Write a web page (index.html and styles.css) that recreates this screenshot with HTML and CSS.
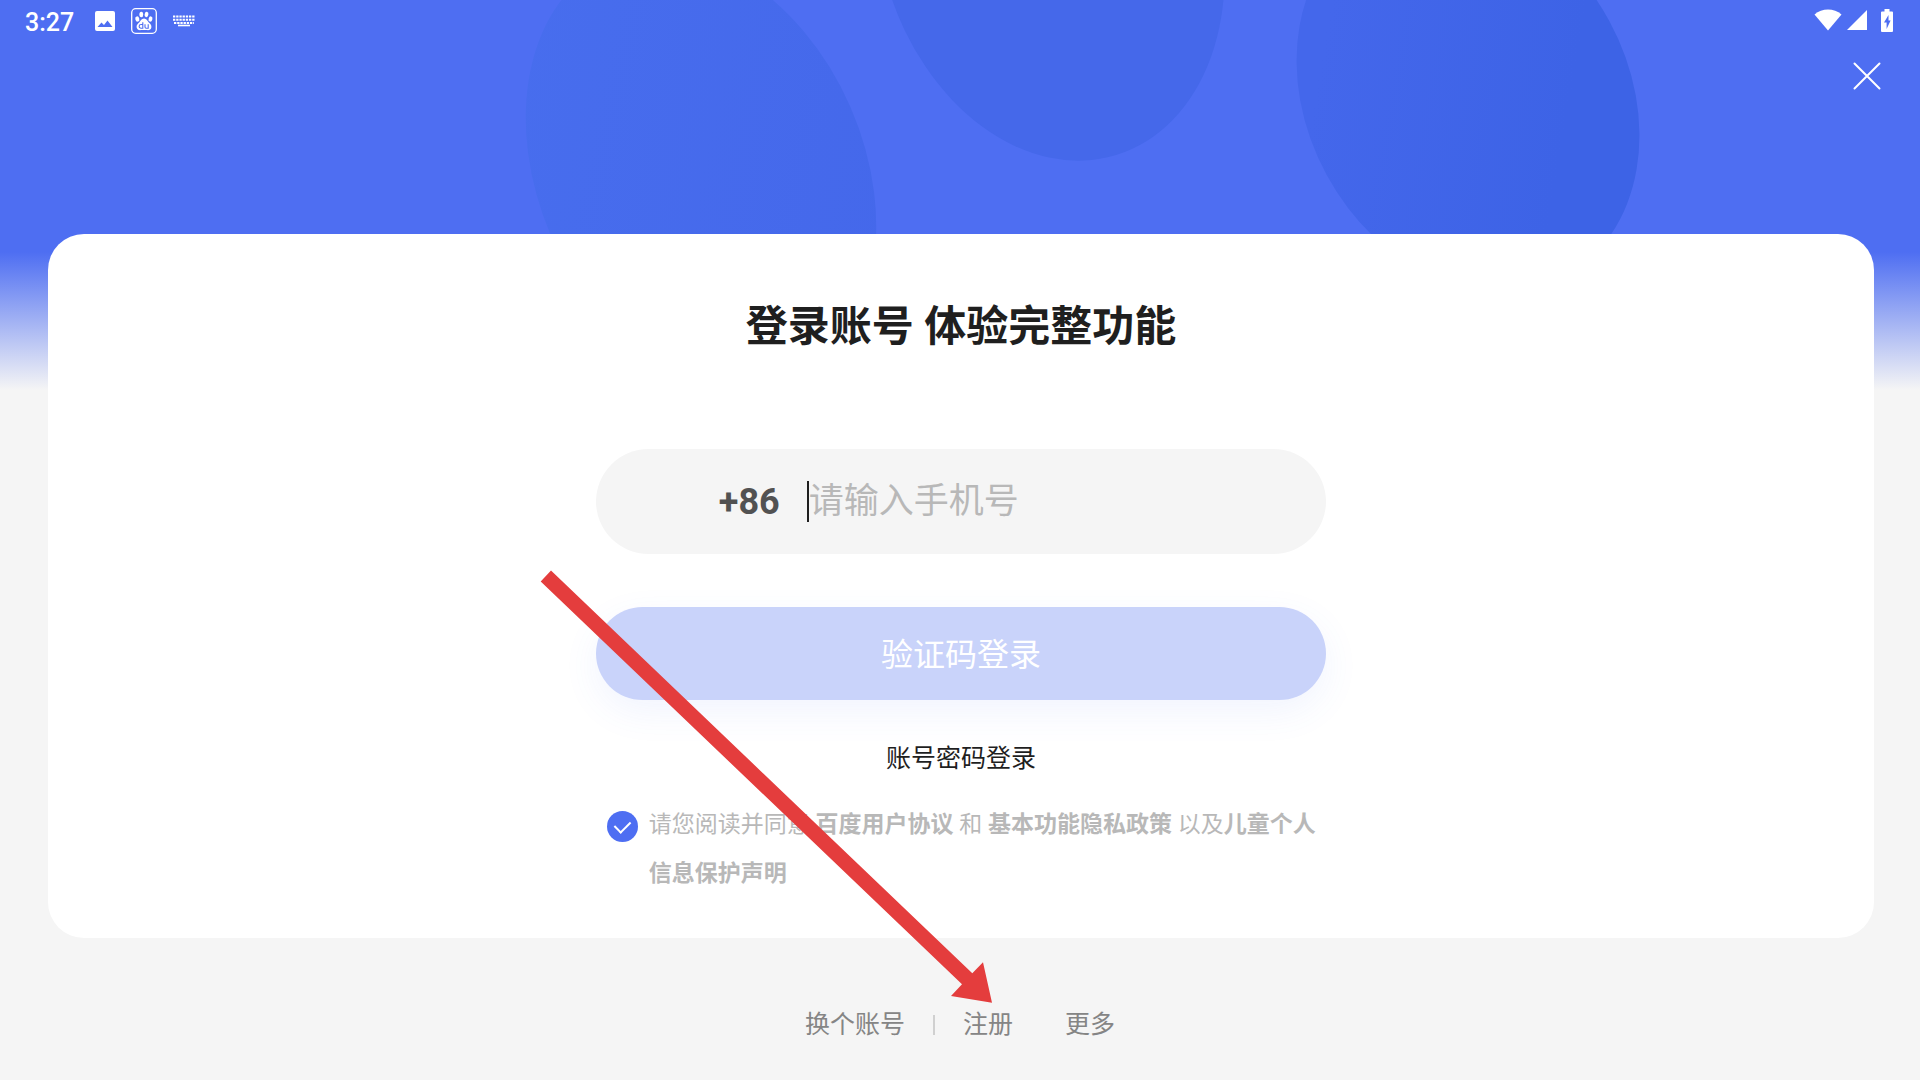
FILE: index.html
```html
<!DOCTYPE html>
<html lang="zh-CN">
<head>
    <meta charset="UTF-8">
    <meta name="viewport" content="width=device-width, initial-scale=1.0">
    <title>登录账号</title>
    <link rel="stylesheet" href="styles.css">
</head>
<body>
    <div class="page">
        <svg class="petals" viewBox="0 0 1920 234" preserveAspectRatio="xMidYMin slice" aria-hidden="true">
            <defs>
                <linearGradient id="petal-left" x1="0" y1="0" x2="1" y2="1">
                    <stop offset="0" stop-color="#486eee"/>
                    <stop offset="1" stop-color="#4467ea"/>
                </linearGradient>
                <linearGradient id="petal-right" x1="0" y1="0" x2="1" y2="1">
                    <stop offset="0.2" stop-color="#4467eb"/>
                    <stop offset="0.7" stop-color="#3d63e6"/>
                </linearGradient>
            </defs>
            <ellipse cx="701" cy="172" rx="163" ry="229" transform="rotate(-23.6 701 172)" fill="url(#petal-left)"/>
            <ellipse cx="1050" cy="-61" rx="169" ry="226" transform="rotate(-17 1050 -61)" fill="#4568ea"/>
            <ellipse cx="1468" cy="98" rx="161" ry="203" transform="rotate(-28.5 1468 98)" fill="url(#petal-right)"/>
        </svg>

        <header class="status-bar">
            <div class="status-left">
                <span class="time">3:27</span>
                <svg class="icon-photo" width="20" height="20" viewBox="0 0 20 20" fill="#fff">
                    <path fill-rule="evenodd" d="M2 0h16a2 2 0 0 1 2 2v16a2 2 0 0 1-2 2H2a2 2 0 0 1-2-2V2a2 2 0 0 1 2-2zM2.500 16h15l-5-6.500-3.500 4.500-2.500-2.500z"/>
                </svg>
                <svg class="icon-paw" width="26" height="26" viewBox="0 0 26 26" fill="#fff">
                    <rect x="0.7" y="0.7" width="24.600" height="24.600" rx="4" fill="none" stroke="#fff" stroke-width="1.300"/>
                    <ellipse cx="6.300" cy="11" rx="2" ry="2.700" transform="rotate(-15 6.300 11)"/>
                    <ellipse cx="10.300" cy="6.500" rx="1.900" ry="2.800"/>
                    <ellipse cx="15.500" cy="6.500" rx="1.900" ry="2.800" transform="rotate(10 15.500 6.500)"/>
                    <ellipse cx="19.500" cy="11" rx="1.900" ry="2.700" transform="rotate(15 19.500 11)"/>
                    <path d="M13 10.500c2.500 0 3.200 2.300 4.800 3.900 1.800 1.600 2.800 2.600 2.600 4.800-.3 2.600-2.600 3.300-4.600 2.900-2-.3-3.600-.3-5.600 0-2.100.4-4.300-.4-4.600-2.900-.2-2.200.9-3.200 2.600-4.800 1.600-1.600 2.300-3.900 4.800-3.900z"/>
                    <path d="M11.800 14.200v6H10a1.800 1.800 0 0 1 0-3.700h1.800M14 16.300v2.700c0 .8.400 1.200 1.200 1.200h2v-3.900" fill="none" stroke="#4e6ef2" stroke-width="1.100"/>
                </svg>
                <svg class="icon-keyboard" width="22" height="12" viewBox="0 0 22 12">
                    <path d="M0 1.500h22M0 4.800h22M1 8h20" stroke="#fff" stroke-width="2" stroke-dasharray="2.300 0.900"/>
                    <path d="M5 10.500h12" stroke="#fff" stroke-width="1.600"/>
                </svg>
            </div>
            <div class="status-right">
                <svg width="28" height="22" viewBox="0 0 28 22" fill="#fff">
                    <path d="M.5 5.500C8-1.200 20-1.200 27.500 5.500L14 21.500z"/>
                </svg>
                <svg width="20" height="20" viewBox="0 0 20 20" fill="#fff">
                    <path d="M20 0v20H0z"/>
                </svg>
                <svg class="icon-battery" width="12" height="23" viewBox="0 0 12 23" fill="#fff">
                    <path d="M3.500 0h5v2.500H11a1 1 0 0 1 1 1V22a1 1 0 0 1-1 1H1a1 1 0 0 1-1-1V3.500a1 1 0 0 1 1-1h2.500z"/>
                    <path d="M7.500 6L3 13.500h2.600v6.500l4-8.500H7.500z" fill="#4e6ef2"/>
                </svg>
            </div>
        </header>

        <div class="toolbar">
            <button type="button" class="close" aria-label="关闭">
                <svg width="28" height="28" viewBox="0 0 28 28">
                    <path d="M1.500 1.500l25 25M26.500 1.500l-25 25" stroke="#fff" stroke-width="2" stroke-linecap="round"/>
                </svg>
            </button>
        </div>

        <main class="card">
            <h1>登录账号 体验完整功能</h1>
            <form class="login-form">
                <div class="phone-field">
                    <label for="phone">+86</label>
                    <input type="tel" id="phone" name="phone" placeholder="请输入手机号">
                </div>
                <button type="submit" class="submit">验证码登录</button>
                <a href="#" class="password-login">账号密码登录</a>
                <div class="agreement">
                    <input type="checkbox" id="agree" name="agree" checked>
                    <label for="agree">请您阅读并同意 <a href="#">百度用户协议</a> 和 <a href="#">基本功能隐私政策</a> 以及<a href="#">儿童个人信息保护声明</a></label>
                </div>
            </form>
        </main>

        <footer class="links">
            <a href="#">换个账号</a>
            <span class="divider"></span>
            <a href="#">注册</a>
            <a href="#" class="more">更多</a>
        </footer>

        <svg class="arrow" viewBox="0 0 1920 1080" aria-hidden="true">
            <path d="M551 570.500L972.300 973.300 983 962.300 992 1002.700 951 996 962 984.300 540.700 581.500z" fill="#e43d3d"/>
        </svg>
    </div>
</body>
</html>
```

FILE: styles.css
```css
* {
    box-sizing: border-box;
}
body {
    margin: 0;
    font-family: Roboto, "Noto Sans CJK SC", sans-serif;
    color: #1f1f1f;
}
a {
    color: inherit;
    text-decoration: none;
}
button {
    padding: 0;
    border: none;
    background: none;
    font-family: inherit;
    cursor: pointer;
}
svg {
    display: block;
}
.page {
    position: relative;
    min-height: 100vh;
    background: linear-gradient(#4e6ef2 252px, #f5f5f5 390px);
}
.petals {
    position: absolute;
    top: 0;
    left: 0;
    width: 100%;
    height: 234px;
}

/* status bar */
.status-bar {
    position: relative;
    display: flex;
    justify-content: space-between;
    height: 42px;
    padding: 0 27px 0 25px;
}
.status-left,
.status-right {
    display: flex;
    align-items: center;
}
.status-left {
    gap: 16px;
}
.status-right {
    gap: 5px;
    height: 40px;
}
.time {
    margin-right: 5px;
    padding-top: 3px;
    font-size: 25px;
    font-weight: 500;
    line-height: 40px;
    color: #fff;
}
.icon-battery {
    margin-left: 9px;
}
.toolbar {
    position: relative;
    display: flex;
    justify-content: flex-end;
    height: 192px;
    padding: 20px 39px;
}
.close {
    width: 28px;
    height: 28px;
}

/* login card */
.card {
    position: relative;
    display: flex;
    flex-direction: column;
    align-items: center;
    margin: 0 46px 0 48px;
    padding: 68px 0 40px;
    border-radius: 36px;
    background: #fff;
}
h1 {
    margin: 0 0 97px;
    font-size: 42px;
    font-weight: 700;
    line-height: 50px;
}
.login-form {
    display: flex;
    flex-direction: column;
    width: 40%;
}
.phone-field {
    display: flex;
    align-items: center;
    gap: 27px;
    height: 105px;
    padding: 0 60px 0 123px;
    border-radius: 53px;
    background: #f5f5f5;
}
.phone-field label {
    font-size: 36px;
    font-weight: 700;
    color: #525252;
}
.phone-field input {
    flex: 1;
    min-width: 0;
    height: 41px;
    padding: 0;
    border: none;
    border-left: 2px solid #1f1f1f;
    outline: none;
    background: none;
    font-family: inherit;
    font-size: 35px;
    color: #1f1f1f;
}
.phone-field input::placeholder {
    color: #b8b8b8;
}
.submit {
    height: 93px;
    margin-top: 53px;
    padding-bottom: 3px;
    border-radius: 47px;
    background: #c9d3fa;
    box-shadow: 0 12px 36px rgba(78, 110, 242, 0.08);
    font-size: 32px;
    color: #fff;
}
.password-login {
    align-self: center;
    margin-top: 39px;
    font-size: 25px;
    line-height: 40px;
}
.agreement {
    display: flex;
    align-items: flex-start;
    gap: 11px;
    margin-top: 21px;
    padding-left: 11px;
    font-size: 23px;
    line-height: 49px;
    color: #b8b8b8;
}
.agreement label {
    flex: 1;
}
.agreement a {
    font-weight: 700;
}
.agreement input {
    display: flex;
    align-items: center;
    justify-content: center;
    appearance: none;
    width: 31px;
    height: 31px;
    margin: 11px 0 0;
    border-radius: 50%;
    background: #4e6ef2;
}
.agreement input::after {
    content: "";
    width: 13px;
    height: 8px;
    margin-bottom: 4px;
    border: solid #fff;
    border-width: 0 0 2px 2px;
    transform: rotate(-45deg);
}

/* bottom links */
.links {
    display: flex;
    align-items: center;
    justify-content: center;
    gap: 28px;
    padding: 67px 0 35px;
    font-size: 25px;
    line-height: 40px;
    color: #858585;
}
.divider {
    width: 2px;
    height: 20px;
    background: #d0d0d0;
}
.more {
    margin-left: 24px;
}

.arrow {
    position: absolute;
    top: 0;
    left: 0;
    width: 100%;
    pointer-events: none;
}
```
